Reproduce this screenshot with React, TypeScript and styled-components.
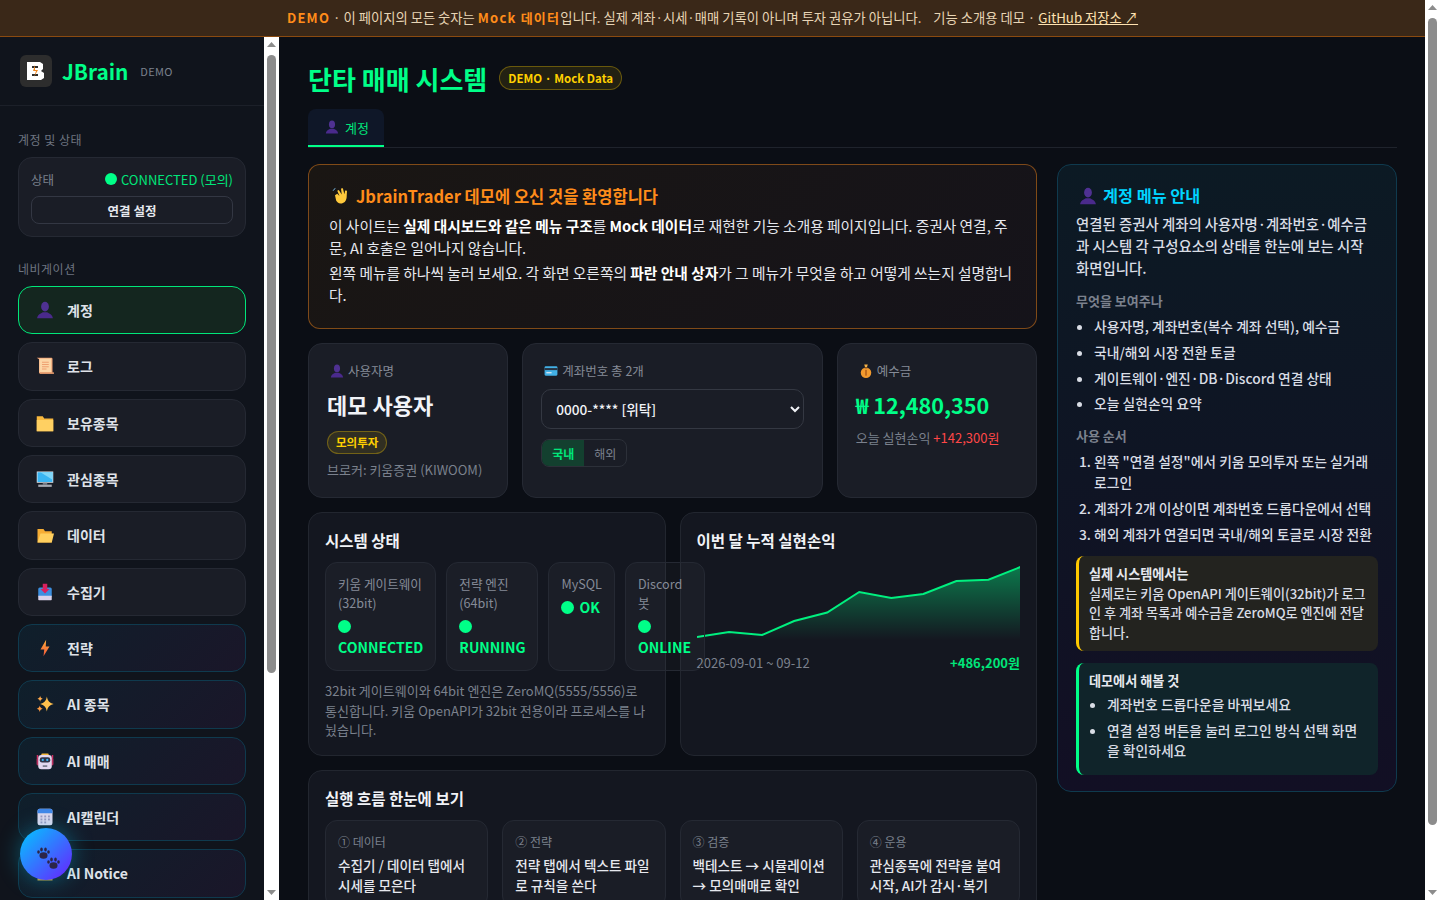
import React from "react";
import styled, { createGlobalStyle, css } from "styled-components";

const Global = createGlobalStyle`
  html, body { margin: 0; padding: 0; background: #0b0e15; }
  body { font-family: "Noto Sans CJK KR", "Noto Sans", sans-serif; color: #e6e8ee; }
  * { box-sizing: border-box; }
`;

const Page = styled.div`padding-right: 15px;`;
const BarRail = styled.div`
  flex: 0 0 15px; width: 15px; background: #fff; display: flex; flex-direction: column;
`;
const PageBar = styled(BarRail)`position: fixed; top: 0; right: 0; bottom: 0; z-index: 5;`;
const BarArrow = styled.svg`display: block; flex: none; width: 15px; height: 15px;`;
const BarTrack = styled.div`flex: 1; min-height: 0; padding: 3px;`;
const BarThumb = styled.div<{ $h: number }>`
  height: ${(p) => p.$h}px; background: #8c8c8c; border-radius: 5px;
`;
const Scrollbar = ({ thumb, as }: { thumb: number; as: typeof BarRail }) => {
  const Rail = as;
  return (
    <Rail>
      <BarArrow viewBox="0 0 15 15"><polygon points="7.500,5 12,10 3,10" fill="#8c8c8c" /></BarArrow>
      <BarTrack><BarThumb $h={thumb} /></BarTrack>
      <BarArrow viewBox="0 0 15 15"><polygon points="3,5 12,5 7.500,10" fill="#8c8c8c" /></BarArrow>
    </Rail>
  );
};

const Banner = styled.div`
  height: 37px; padding-bottom: 1px; border-bottom: 1px solid #8a4a10; background: #3a2818;
  display: flex; align-items: center; justify-content: center; white-space: pre;
  font-size: 13.3px; color: #e8d5b5;
`;
const BannerStrong = styled.b`color: #ff8c1a; font-size: 13px; letter-spacing: 1.2px; font-weight: 700;`;
const BannerLink = styled.a`color: #ffe2b0; text-decoration: underline;`;
const Shell = styled.div`display: flex; align-items: flex-start;`;
const Sidebar = styled.aside`
  flex: 0 0 280px; height: calc(100vh - 37px); position: sticky; top: 0;
  display: flex; background: #10141c; border-right: 1px solid #0c0f16;
`;
const SideInner = styled.div`flex: 0 0 264px; width: 264px; overflow: hidden;`;
const Brand = styled.div`
  display: flex; align-items: center; height: 69px; padding: 0 20px;
  border-bottom: 1px solid #1c2029;
`;
const LogoBox = styled.div`
  width: 32px; height: 32px; border-radius: 6px; background: #2d2d2d;
  display: flex; align-items: center; justify-content: center; margin-right: 10px;
`;
const BrandName = styled.span`font-size: 20.8px; font-weight: 700; color: #00ff88; margin-right: 12px;`;
const BrandTag = styled.span`font-size: 11px; color: #7b818d; letter-spacing: .3px;`;
const SideBody = styled.div`padding: 25px 18px 20px;`;
const SideLabel = styled.div`font-size: 12px; line-height: 17px; letter-spacing: .5px; color: #6e7480; margin-bottom: 9px;`;
const StatusCard = styled.div`
  border: 1px solid #252933; border-radius: 14px; background: #1a1d26; padding: 12px;
  margin-bottom: 23px;
`;
const StatusRow = styled.div`display: flex; align-items: center; justify-content: space-between; height: 18px; margin-bottom: 8px; font-size: 13px;`;
const StatusKey = styled.span`color: #7b818d; font-size: 12.5px;`;
const StatusVal = styled.span`display: flex; align-items: center; gap: 4px; color: #00e67a; font-size: 13px;`;
const Dot = styled.i`
  display: inline-block; width: 12px; height: 12px; border-radius: 50%; background: #00ff88;
`;
const GhostBtn = styled.button`
  display: block; width: 100%; height: 28px; border: 1px solid #333743; border-radius: 8px;
  background: #1a1d26; color: #e6e8ee; font: 700 12.5px "Noto Sans CJK KR", sans-serif;
`;
const NavList = styled.nav`display: flex; flex-direction: column; gap: 8px;`;
const NavItem = styled.div<{ $kind?: "active" | "ai" }>`
  display: flex; align-items: center; gap: 13px; padding: 13px 17px; border-radius: 14px;
  border: 1px solid #252933; background: #1a1d26; font-size: 14px; line-height: 20.33px; font-weight: 700; color: #dfe2e8;
  ${(p) => p.$kind === "active" && css`border-color: #00e67a; background: #14261f;`}
  ${(p) => p.$kind === "ai" && css`
    border-color: #0f3a4e;
    background: linear-gradient(135deg, #0f1f2b, #1a1629);
  `}
`;
const Fab = styled.button`
  position: fixed; left: 20px; bottom: 20px; width: 52px; height: 52px; border-radius: 50%; border: 0; padding: 0;
  background: linear-gradient(135deg, #00c8ff, #6a1fff); box-shadow: 0 0 22px rgba(0, 212, 255, .35);
  display: flex; align-items: center; justify-content: center;
`;
const Main = styled.main`flex: 1; min-width: 0; padding: 23px 28px 40px;`;
const TitleRow = styled.div`display: flex; align-items: center; gap: 12px; margin-bottom: 12px;`;
const Title = styled.h1`margin: 0; font-size: 26px; font-weight: 700; color: #00ff88;`;
const Pill = styled.span`
  display: block; width: fit-content; padding: 3px 8px; border-radius: 999px; border: 1px solid rgba(255, 208, 0, .32);
  background: rgba(255, 208, 0, .1); color: #ffd000; font-weight: 700; font-size: 11.5px; line-height: 15px;
`;
const TitlePill = styled(Pill)`line-height: 16px; padding: 3px 8px; margin-top: -1px;`;
const Tabs = styled.div`display: flex; border-bottom: 1px solid #1f232c; margin-bottom: 16px;`;
const Tab = styled.div`
  display: flex; align-items: center; gap: 6px; height: 38px; padding: 0 15px 0 17px;
  background: #0f1728; border-bottom: 2px solid #00ff88; border-radius: 8px 8px 0 0; color: #00e67a; font-size: 13px;
`;
const Columns = styled.div`display: grid; grid-template-columns: 1fr 340px; gap: 20px; align-items: start;`;
const Left = styled.div`display: flex; flex-direction: column; gap: 14px; min-width: 0;`;
const Welcome = styled.section`
  border: 1px solid rgba(255, 140, 26, .45); border-radius: 12px; padding: 20px;
  background: linear-gradient(135deg, #1a1613, #15131a); height: 165px;
`;
const WelcomeTitle = styled.h2`
  margin: 0 0 8px; display: flex; align-items: center; gap: 6px; padding-left: 3px;
  font-size: 16.5px; line-height: 22px; font-weight: 700; color: #ff8c1a;
`;
const WelcomeText = styled.p`margin: 0 0 2px; font-size: 14.72px; line-height: 22.3px; color: #e6e8ee; b { font-weight: 700; color: #fff; }`;
const StatGrid = styled.div`display: grid; grid-template-columns: 1fr 1.5fr 1fr; gap: 14px;`;
const Card = styled.section`
  border: 1px solid #252933; border-radius: 14px; background: #1a1d26; padding: 18px; height: 155px;
`;
const CardLabel = styled.div`
  display: flex; align-items: center; gap: 4px; padding-left: 3px; font-size: 12.5px; line-height: 17px; color: #858b97;
`;
const UserName = styled.div`margin: 9px 0 11px; font-size: 22px; line-height: 32px; font-weight: 700; color: #f1f3f7;`;
const Broker = styled.div`margin-top: 6px; font-size: 13px; line-height: 19px; color: #7b818d;`;
const AccountSelect = styled.select`
  display: block; width: 100%; height: 40px; margin: 10px 0; padding: 0 10px; border-radius: 10px;
  border: 1px solid #343842; background: #1a1d26; color: #f1f3f7;
  font: 500 13.6px "Noto Sans CJK KR", sans-serif;
`;
const Toggle = styled.div`
  display: inline-flex; height: 28px; border: 1px solid #2c3039; border-radius: 8px; overflow: hidden;
`;
const ToggleBtn = styled.span<{ $on?: boolean }>`
  width: 42px; display: flex; align-items: center; justify-content: center; font-size: 12px;
  color: ${(p) => (p.$on ? "#00e67a" : "#7b818d")}; font-weight: ${(p) => (p.$on ? 700 : 400)};
  background: ${(p) => (p.$on ? "#13402f" : "transparent")};
`;
const Money = styled.div`margin: 10px 0 8px; font-size: 21.6px; line-height: 32px; font-weight: 700; color: #00ff88;`;
const MoneySub = styled.div`font-size: 13px; line-height: 18px; color: #7b818d;`;
const Red = styled.span`color: #ff4747;`;
const TwoCols = styled.div`display: grid; grid-template-columns: 1fr 1fr; gap: 14px;`;
const Panel = styled.section`
  border: 1px solid #22262f; border-radius: 14px; background: rgba(26, 29, 38, .62); padding: 16px 16px 15px; min-width: 0;
`;
const PanelTitle = styled.h3`margin: 0 0 11px; font-size: 15.5px; line-height: 22px; font-weight: 700; color: #f1f3f7;`;
const SysRow = styled.div`display: flex; gap: 10px; position: relative; z-index: 1;`;
const SysCard = styled.div<{ $w: number }>`
  flex: 0 0 ${(p) => p.$w}px; border: 1px solid #252933; border-radius: 12px; background: rgba(255, 255, 255, .03);
  padding: 11px 12px 12px; font-size: 12.6px; line-height: 19px; color: #858b97;
`;
const SysStatus = styled.div`font-size: 14px; line-height: 21px; margin-top: 4px; font-weight: 700; color: #00ff88;`;
const SysDot = styled(Dot)`width: 13px; height: 13px; margin-right: 5px; vertical-align: -1px;`;
const Note = styled.p`margin: 10px 0 0; font-size: 13px; line-height: 19.5px; color: #7b818d;`;
const ChartSvg = styled.svg`display: block; width: 100%; height: 80px;`;
const ChartFoot = styled.div`display: flex; justify-content: space-between; margin-top: 12px; font-size: 13px; line-height: 18px; color: #7b818d;`;
const Gain = styled.b`color: #00e67a; font-weight: 700;`;
const FlowGrid = styled.div`display: grid; grid-template-columns: repeat(4, 1fr); gap: 14px;`;
const FlowCard = styled.div`
  border: 1px solid #252933; border-radius: 12px; background: #1a1d26; padding: 12px; height: 88px;
`;
const FlowStep = styled.div`font-size: 12px; line-height: 18px; color: #7b818d; margin-bottom: 4px;`;
const FlowText = styled.div`font-size: 13.6px; line-height: 20px; font-weight: 500; color: #e6e8ee;`;
const Guide = styled.aside`
  border: 1px solid #0f3a4e; border-radius: 14px; padding: 19px 18px 16px;
  background: linear-gradient(180deg, #0c1a24, #120f24);
`;
const GuideTitle = styled.h2`
  margin: 0 0 6px; display: flex; align-items: center; gap: 6px; padding-left: 3px;
  font-size: 16.3px; line-height: 23px; font-weight: 700; color: #00d4ff;
`;
const GuideText = styled.p`margin: 0; font-size: 14.4px; line-height: 22px; font-weight: 500; color: #d9dde5;`;
const GuideHead = styled.h4`margin: 13px 0 6px; font-size: 13px; line-height: 18px; font-weight: 700; color: #7b818d;`;
const listStyles = css`
  margin: 0; padding-left: 18px; font-size: 13.8px; line-height: 20.8px; font-weight: 500; color: #d9dde5;
  li { margin-bottom: 5px; }
`;
const Ul = styled.ul`${listStyles}`;
const CalloutUl = styled(Ul)`margin-top: 3px;`;
const Ol = styled.ol`${listStyles} margin-bottom: 7px;`;
const Callout = styled.div<{ $tone: "warn" | "ok" }>`
  border-radius: 8px; border-left: 3px solid ${(p) => (p.$tone === "warn" ? "#ffc800" : "#00ff88")};
  background: ${(p) => (p.$tone === "warn" ? "#23231f" : "#10242a")};
  padding: 8px 10px 9px; font-size: 13.12px; line-height: 19.5px; font-weight: 500; color: #d9dde5; margin-top: 12px;
  b { font-weight: 700; display: block; color: #e6e8ee; }
`;

type IP = { s?: number };
const Ico = styled.svg`flex: none; display: block;`;
const I = ({ s = 18, children }: IP & { children: React.ReactNode }) => (
  <Ico width={s} height={s} viewBox="0 0 24 24">{children}</Ico>
);
const Person = ({ s }: IP) => (
  <I s={s}>
    <ellipse cx="12" cy="7.5" rx="5.2" ry="6.5" fill="#4f3192" />
    <path d="M1.5 23c.5-5 5-6.5 7.5-8h6c2.5 1.5 7 3 7.500 8z" fill="#4a2a8c" />
  </I>
);
const Scroll = () => (
  <I>
    <path d="M1 1h20l1 1v20H5l-1-1V3z" fill="#ee9f72" />
    <rect x="4.500" y="2" width="16" height="18.500" fill="#fcd6a6" />
    <path d="M8 7h9M8 10h9M8 13h9M8 16h6" stroke="#e98e5e" strokeWidth="1" />
    <rect x="5" y="20.500" width="19" height="2" fill="#e3996b" />
  </I>
);
const Folder = () => (
  <I>
    <path d="M1 3h8l2 3h12v17H1z" fill="#f8b83e" />
    <path d="M1 8h22v15H1z" fill="#ffd062" />
  </I>
);
const Monitor = () => (
  <I>
    <rect x="1" y="2" width="22" height="15" fill="#e4e6ea" />
    <path d="M2 3h20v13H2z" fill="#39b5f3" />
    <path d="M6 3h16v10z" fill="#7fd6f8" />
    <rect x="9" y="17" width="6" height="2.500" fill="#767b86" />
    <rect x="3" y="19.500" width="18" height="3" fill="#a5a9b2" />
  </I>
);
const OpenFolder = () => (
  <I>
    <path d="M2 4h8l2 3h9v15H2z" fill="#f6ad34" />
    <path d="M6 10h18l-3 12H2z" fill="#ffcf5e" />
  </I>
);
const Inbox = () => (
  <I>
    <rect x="3" y="6" width="18" height="13" rx="2" fill="#3c8fe0" />
    <path d="M9 1h6v7h3l-6 6-6-6h3z" fill="#d9215f" />
    <path d="M3 17h18v5a1 1 0 0 1-1 1H4a1 1 0 0 1-1-1z" fill="#d9d2ea" />
  </I>
);
const Bolt = () => (
  <I>
    <defs>
      <linearGradient id="bolt" x1="0" y1="0" x2="0" y2="1">
        <stop offset="0" stopColor="#ffb03a" />
        <stop offset="1" stopColor="#f0553a" />
      </linearGradient>
    </defs>
    <path d="M13.500 1 6 14h5l-1 9 8-13h-5z" fill="url(#bolt)" />
  </I>
);
const Sparkles = () => (
  <I>
    <path d="M14.500 2c1 6 3.500 8.500 9 10-5.500 1.500-8 4-9 10-1-6-3.500-8.500-9-10 5.500-1.500 8-4 9-10z" fill="#ffc04d" />
    <path d="M5.500 1c.5 2.400 1.400 3.300 3.500 4-2.100.6-3 1.500-3.500 4-.5-2.500-1.400-3.400-3.500-4 2.100-.7 3-1.600 3.500-4z" fill="#ffa94a" />
    <path d="M5 14c.5 2.500 1.500 3.500 4 4.200-2.500.7-3.500 1.700-4 4.300-.5-2.600-1.500-3.600-4-4.300 2.500-.7 3.500-1.700 4-4.200z" fill="#ff9c42" />
  </I>
);
const Robot = () => (
  <I>
    <rect x="7" y="2" width="10" height="3" rx="1.500" fill="#f5b83d" />
    <path d="M2 4v13M22 4v13" stroke="#d02f64" strokeWidth="2" />
    <rect x="1" y="8" width="22" height="10" rx="2" fill="#b8305f" />
    <rect x="3" y="4" width="18" height="19" rx="4" fill="#e3d8ef" />
    <rect x="5" y="7" width="14" height="7" rx="3" fill="#2f3348" />
    <circle cx="9" cy="10.500" r="1.500" fill="#3fb8f5" />
    <circle cx="15" cy="10.500" r="1.500" fill="#3fb8f5" />
    <rect x="9" y="18" width="6" height="1.500" fill="#444a5c" />
  </I>
);
const Calendar = () => (
  <I>
    <rect x="2" y="1" width="20" height="22" rx="3" fill="#ddd6ec" />
    <path d="M2 7V4a3 3 0 0 1 3-3h14a3 3 0 0 1 3 3v3z" fill="#3f86e8" />
    <g fill="#9a96bc">
      <rect x="6" y="10" width="2.500" height="2.500" /><rect x="11" y="10" width="2.500" height="2.500" /><rect x="16" y="10" width="2.500" height="2.500" />
      <rect x="6" y="14" width="2.500" height="2.500" /><rect x="11" y="14" width="2.500" height="2.500" /><rect x="16" y="14" width="2.500" height="2.500" />
      <rect x="6" y="18" width="2.500" height="2.500" /><rect x="11" y="18" width="2.500" height="2.500" />
    </g>
  </I>
);
const Bell = () => (
  <I>
    <path d="M12 2c5 0 7 4 7 9v5l3 3H2l3-3v-5c0-5 2-9 7-9z" fill="#f5bf45" />
    <rect x="2" y="19" width="20" height="3" fill="#c69a36" />
  </I>
);
const Wave = () => (
  <I>
    <path d="M4 11l3-2 3 3-3-7 2-1 4 6-1-8 2.500-.5 2 8 1-5 2.500.5-.5 9c-.5 5-3.500 8-8 8-3 0-5-2-6-4z" fill="#ffc93c" />
    <path d="M1.500 5c.5-1.500 1.500-2.500 3-3" stroke="#7fc4f2" strokeWidth="1.200" fill="none" />
  </I>
);
const CreditCard = ({ s = 14 }: IP) => (
  <I s={s}>
    <rect x="1" y="4" width="22" height="16" rx="2" fill="#42b0e6" />
    <rect x="1" y="7" width="22" height="3.500" fill="#27313f" />
    <rect x="4" y="14" width="9" height="2" fill="#e9eef4" />
  </I>
);
const MoneyBag = ({ s = 14 }: IP) => (
  <I s={s}>
    <path d="M9 1h6l-1.500 5h-3z" fill="#f5b247" />
    <circle cx="12" cy="15" r="9" fill="#f29a2e" />
    <rect x="9.500" y="5.500" width="5" height="2" fill="#7a4a1e" />
    <rect x="10.500" y="10" width="3" height="10" fill="#b9651c" />
  </I>
);
const Paw = ({ x, y }: { x: number; y: number }) => (
  <g transform={`translate(${x} ${y})`} fill="#2c2547">
    <ellipse cx="6.500" cy="8.500" rx="4" ry="3.200" />
    <ellipse cx="1.500" cy="5" rx="1.300" ry="1.800" />
    <ellipse cx="4.500" cy="2.500" rx="1.300" ry="1.900" />
    <ellipse cx="8.500" cy="2.500" rx="1.300" ry="1.900" />
    <ellipse cx="11.500" cy="5" rx="1.300" ry="1.800" />
  </g>
);
const Logo = () => (
  <svg width="18" height="18" viewBox="0 0 18 18">
    <path d="M0 0h13l3 2v5l-2 2 3 2v5l-3 2H0z" fill="#fff" />
    <path d="M5 4h6v2H5zM5 12h6v2H5z" fill="#2d2d2d" />
    <path d="M8 3 6 9h3l-2 6 4-7H8z" fill="#f08a24" />
  </svg>
);

const nav: { label: string; icon: React.ReactNode; kind?: "active" | "ai" }[] = [
  { label: "계정", icon: <Person />, kind: "active" },
  { label: "로그", icon: <Scroll /> },
  { label: "보유종목", icon: <Folder /> },
  { label: "관심종목", icon: <Monitor /> },
  { label: "데이터", icon: <OpenFolder /> },
  { label: "수집기", icon: <Inbox /> },
  { label: "전략", icon: <Bolt />, kind: "ai" },
  { label: "AI 종목", icon: <Sparkles />, kind: "ai" },
  { label: "AI 매매", icon: <Robot />, kind: "ai" },
  { label: "AI캘린더", icon: <Calendar />, kind: "ai" },
  { label: "AI Notice", icon: <Bell />, kind: "ai" },
];

const points: [number, number][] = [
  [0, 75], [32, 70], [65, 73], [97, 59], [130, 50.500], [162, 30], [194, 36], [226, 32], [259, 19], [291, 17.700], [323, 5],
];
const line = points.map((p) => p.join(",")).join(" ");

const systems = [
  { w: 111, label: "키움 게이트웨이 (32bit)", status: "CONNECTED" },
  { w: 92, label: "전략 엔진 (64bit)", status: "RUNNING" },
  { w: 65, label: "MySQL", status: "OK" },
  { w: 80, label: "Discord 봇", status: "ONLINE" },
];
const flow = [
  { step: "① 데이터", text: "수집기 / 데이터 탭에서 시세를 모은다" },
  { step: "② 전략", text: "전략 탭에서 텍스트 파일로 규칙을 쓴다" },
  { step: "③ 검증", text: "백테스트 → 시뮬레이션 → 모의매매로 확인" },
  { step: "④ 운용", text: "관심종목에 전략을 붙여 시작, AI가 감시·복기" },
];

export default function App() {
  return (
    <Page>
      <Global />
      <Banner>
        <BannerStrong>DEMO</BannerStrong>{" · 이 페이지의 모든 숫자는 "}
        <BannerStrong>Mock 데이터</BannerStrong>{"입니다. 실제 계좌·시세·매매 기록이 아니며 투자 권유가 아닙니다.    기능 소개용 데모 · "}
        <BannerLink href="#">GitHub 저장소 ↗</BannerLink>
      </Banner>
      <Shell>
        <Sidebar>
          <SideInner>
            <Brand>
              <LogoBox><Logo /></LogoBox>
              <BrandName>JBrain</BrandName>
              <BrandTag>DEMO</BrandTag>
            </Brand>
            <SideBody>
              <SideLabel>계정 및 상태</SideLabel>
              <StatusCard>
                <StatusRow>
                  <StatusKey>상태</StatusKey>
                  <StatusVal><Dot />CONNECTED (모의)</StatusVal>
                </StatusRow>
                <GhostBtn>연결 설정</GhostBtn>
              </StatusCard>
              <SideLabel>네비게이션</SideLabel>
              <NavList>
                {nav.map((n) => (
                  <NavItem key={n.label} $kind={n.kind}>{n.icon}{n.label}</NavItem>
                ))}
              </NavList>
            </SideBody>
          </SideInner>
          <Scrollbar thumb={618} as={BarRail} />
        </Sidebar>
        <Main>
          <TitleRow>
            <Title>단타 매매 시스템</Title>
            <TitlePill>DEMO · Mock Data</TitlePill>
          </TitleRow>
          <Tabs>
            <Tab><Person s={14} />계정</Tab>
          </Tabs>
          <Columns>
            <Left>
              <Welcome>
                <WelcomeTitle><Wave />JbrainTrader 데모에 오신 것을 환영합니다</WelcomeTitle>
                <WelcomeText>
                  이 사이트는 <b>실제 대시보드와 같은 메뉴 구조</b>를 <b>Mock 데이터</b>로 재현한 기능 소개용 페이지입니다. 증권사 연결, 주문, AI 호출은 일어나지 않습니다.
                </WelcomeText>
                <WelcomeText>
                  왼쪽 메뉴를 하나씩 눌러 보세요. 각 화면 오른쪽의 <b>파란 안내 상자</b>가 그 메뉴가 무엇을 하고 어떻게 쓰는지 설명합니다.
                </WelcomeText>
              </Welcome>
              <StatGrid>
                <Card>
                  <CardLabel><Person s={14} />사용자명</CardLabel>
                  <UserName>데모 사용자</UserName>
                  <Pill>모의투자</Pill>
                  <Broker>브로커: 키움증권 (KIWOOM)</Broker>
                </Card>
                <Card>
                  <CardLabel><CreditCard />계좌번호 총 2개</CardLabel>
                  <AccountSelect defaultValue="a">
                    <option value="a">0000-**** [위탁]</option>
                    <option value="b">0001-**** [위탁]</option>
                  </AccountSelect>
                  <Toggle>
                    <ToggleBtn $on>국내</ToggleBtn>
                    <ToggleBtn>해외</ToggleBtn>
                  </Toggle>
                </Card>
                <Card>
                  <CardLabel><MoneyBag />예수금</CardLabel>
                  <Money>₩ 12,480,350</Money>
                  <MoneySub>오늘 실현손익 <Red>+142,300원</Red></MoneySub>
                </Card>
              </StatGrid>
              <TwoCols>
                <Panel>
                  <PanelTitle>시스템 상태</PanelTitle>
                  <SysRow>
                    {systems.map((s) => (
                      <SysCard key={s.label} $w={s.w}>
                        {s.label}
                        <SysStatus><SysDot />{s.status}</SysStatus>
                      </SysCard>
                    ))}
                  </SysRow>
                  <Note>32bit 게이트웨이와 64bit 엔진은 ZeroMQ(5555/5556)로 통신합니다. 키움 OpenAPI가 32bit 전용이라 프로세스를 나눴습니다.</Note>
                </Panel>
                <Panel>
                  <PanelTitle>이번 달 누적 실현손익</PanelTitle>
                  <ChartSvg viewBox="0 0 323 80" preserveAspectRatio="none">
                    <defs>
                      <linearGradient id="area" x1="0" y1="0" x2="0" y2="1">
                        <stop offset="0" stopColor="#00ff88" stopOpacity=".42" />
                        <stop offset="1" stopColor="#00ff88" stopOpacity="0" />
                      </linearGradient>
                    </defs>
                    <polygon points={`0,78 ${line} 323,78`} fill="url(#area)" />
                    <polyline points={line} fill="none" stroke="#00f07f" strokeWidth="2" />
                  </ChartSvg>
                  <ChartFoot><span>2026-09-01 ~ 09-12</span><Gain>+486,200원</Gain></ChartFoot>
                </Panel>
              </TwoCols>
              <Panel>
                <PanelTitle>실행 흐름 한눈에 보기</PanelTitle>
                <FlowGrid>
                  {flow.map((f) => (
                    <FlowCard key={f.step}>
                      <FlowStep>{f.step}</FlowStep>
                      <FlowText>{f.text}</FlowText>
                    </FlowCard>
                  ))}
                </FlowGrid>
              </Panel>
            </Left>
            <Guide>
              <GuideTitle><Person />계정 메뉴 안내</GuideTitle>
              <GuideText>연결된 증권사 계좌의 사용자명·계좌번호·예수금과 시스템 각 구성요소의 상태를 한눈에 보는 시작 화면입니다.</GuideText>
              <GuideHead>무엇을 보여주나</GuideHead>
              <Ul>
                <li>사용자명, 계좌번호(복수 계좌 선택), 예수금</li>
                <li>국내/해외 시장 전환 토글</li>
                <li>게이트웨이·엔진·DB·Discord 연결 상태</li>
                <li>오늘 실현손익 요약</li>
              </Ul>
              <GuideHead>사용 순서</GuideHead>
              <Ol>
                <li>왼쪽 "연결 설정"에서 키움 모의투자 또는 실거래 로그인</li>
                <li>계좌가 2개 이상이면 계좌번호 드롭다운에서 선택</li>
                <li>해외 계좌가 연결되면 국내/해외 토글로 시장 전환</li>
              </Ol>
              <Callout $tone="warn">
                <b>실제 시스템에서는</b>
                실제로는 키움 OpenAPI 게이트웨이(32bit)가 로그인 후 계좌 목록과 예수금을 ZeroMQ로 엔진에 전달합니다.
              </Callout>
              <Callout $tone="ok">
                <b>데모에서 해볼 것</b>
                <CalloutUl>
                  <li>계좌번호 드롭다운을 바꿔보세요</li>
                  <li>연결 설정 버튼을 눌러 로그인 방식 선택 화면을 확인하세요</li>
                </CalloutUl>
              </Callout>
            </Guide>
          </Columns>
        </Main>
      </Shell>
      <Scrollbar thumb={807} as={PageBar} />
      <Fab aria-label="assistant">
        <svg width="32" height="32" viewBox="0 0 32 32">
          <Paw x={7} y={9} />
          <Paw x={17} y={19} />
        </svg>
      </Fab>
    </Page>
  );
}
